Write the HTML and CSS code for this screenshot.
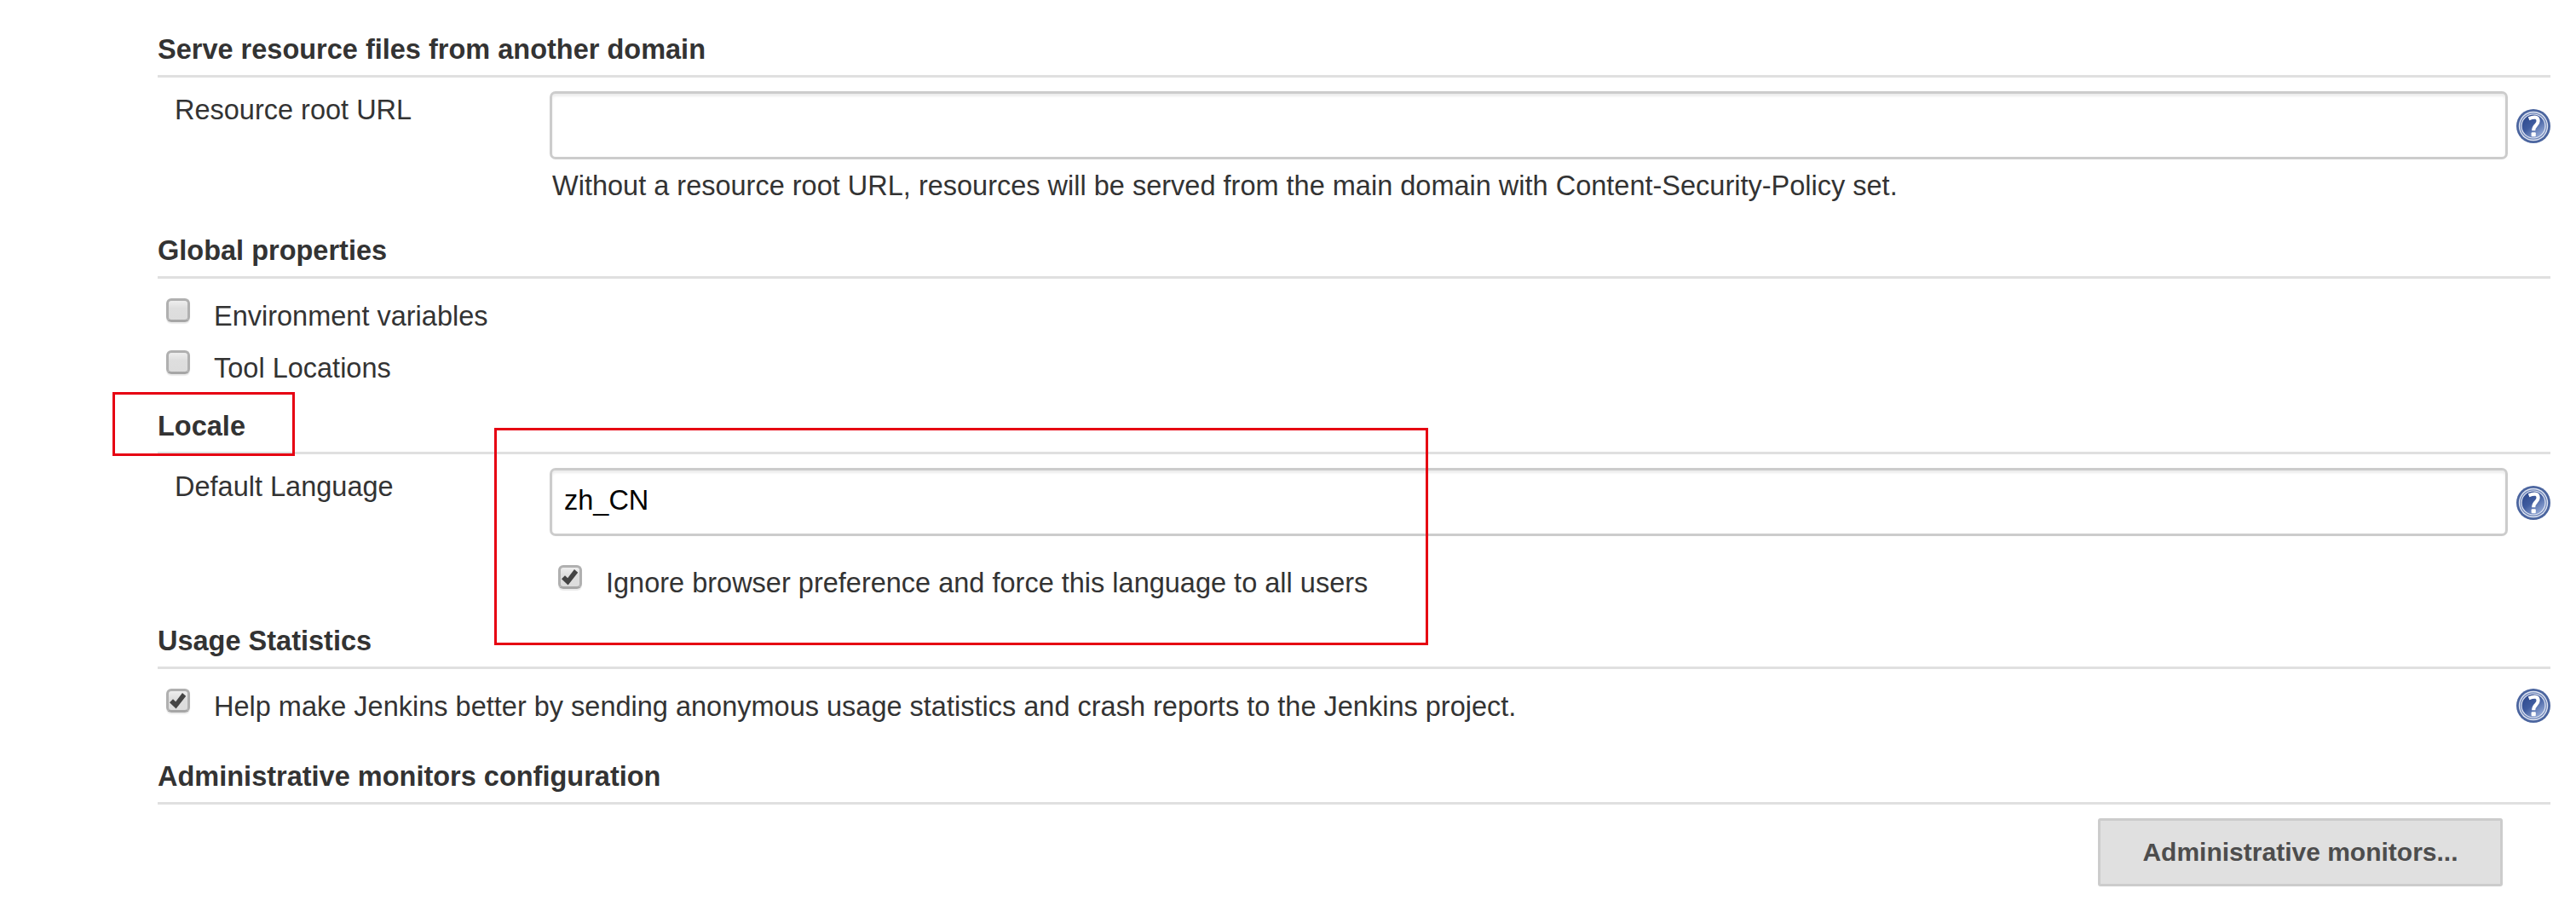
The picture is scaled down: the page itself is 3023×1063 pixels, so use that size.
FILE: index.html
```html
<!DOCTYPE html>
<html lang="en">
<head>
<meta charset="utf-8">
<title>Configure System</title>
<link rel="stylesheet" href="styles.css">
</head>
<body>
<svg width="0" height="0" class="defs">
  <defs>
    <linearGradient id="help-fill" x1="0.1" y1="0" x2="0.9" y2="1">
      <stop offset="0" stop-color="#2d488c"/><stop offset="0.45" stop-color="#3f5c9f"/><stop offset="1" stop-color="#a3b7e0"/>
    </linearGradient>
    <symbol id="help" viewBox="0 0 40 40">
      <circle cx="20" cy="20" r="20" fill="#4b659f"/>
      <circle cx="20" cy="20" r="17.2" fill="#dfe5f2"/>
      <circle cx="20" cy="20" r="15.8" fill="#6d84b8"/>
      <circle cx="20" cy="20" r="14.6" fill="#e3e8f4"/>
      <circle cx="20" cy="20" r="13.4" fill="url(#help-fill)"/>
      <path d="M14.6 11.2Q25.6 7 25.6 14C25.6 19 20.2 18.6 20.2 25.2" fill="none" stroke="#fff" stroke-width="4.2"/>
      <rect x="17.6" y="27.2" width="5.2" height="5" rx="1" fill="#fff"/>
    </symbol>
  </defs>
</svg>
<main class="config">
  <section class="section">
    <h2 class="heading">Serve resource files from another domain</h2>
    <div class="field">
      <label class="label" for="root-url">Resource root URL</label>
      <input class="input" id="root-url" type="text">
      <svg class="help"><use href="#help"/></svg>
      <p class="description">Without a resource root URL, resources will be served from the main domain with Content-Security-Policy set.</p>
    </div>
  </section>
  <section class="section globals">
    <h2 class="heading">Global properties</h2>
    <div class="option"><input class="check" type="checkbox" id="env"><label for="env">Environment variables</label></div>
    <div class="option"><input class="check" type="checkbox" id="tool"><label for="tool">Tool Locations</label></div>
  </section>
  <section class="section locale">
    <h2 class="heading">Locale</h2>
    <div class="field">
      <label class="label" for="lang">Default Language</label>
      <input class="input" id="lang" type="text" value="zh_CN">
      <svg class="help"><use href="#help"/></svg>
      <div class="option nested"><span class="check"><svg class="tick" viewBox="0 0 28 28"><path d="M4 16.2 8 12.2 11.2 15.2 19 5 23.2 8.8 11.6 23.4Z"/></svg></span><span>Ignore browser preference and force this language to all users</span></div>
    </div>
  </section>
  <section class="section usage">
    <h2 class="heading">Usage Statistics</h2>
    <div class="option"><span class="check"><svg class="tick" viewBox="0 0 28 28"><path d="M4 16.2 8 12.2 11.2 15.2 19 5 23.2 8.8 11.6 23.4Z"/></svg></span><span>Help make Jenkins better by sending anonymous usage statistics and crash reports to the Jenkins project.</span><svg class="help"><use href="#help"/></svg></div>
  </section>
  <section class="section monitors">
    <h2 class="heading">Administrative monitors configuration</h2>
    <div class="actions"><button class="button" type="button">Administrative monitors...</button></div>
  </section>
</main>
<div class="mark mark-title"></div>
<div class="mark mark-fields"></div>
</body>
</html>
```
FILE: styles.css
```css
* { box-sizing: border-box; }
body {
  margin: 0;
  position: relative;
  height: 1063px;
  overflow: hidden;
  background: #fff;
  color: #333;
  font: 32.5px/40px "Liberation Sans", Arial, sans-serif;
}
.defs { position: absolute; }
.config { padding: 38px 30px 0 185px; }
.section { margin-bottom: 36px; }
.globals, .locale { margin-bottom: 28px; }
.usage { margin-bottom: 42px; }
.monitors { margin-bottom: 0; }
.heading {
  margin: 0;
  padding-bottom: 10px;
  border-bottom: 3px solid #e0e0e0;
  font-size: inherit;
  font-weight: bold;
}
.field {
  display: grid;
  grid-template-columns: 440px 1fr 40px;
  padding: 16px 0 0 20px;
}
.label { padding-top: 2px; }
.input {
  width: auto;
  height: 80px;
  margin-right: 10px;
  padding: 0 15px 3px 14px;
  border: 3px solid #ccc;
  border-radius: 7px;
  background: #fff;
  box-shadow: inset 0 3px 3px rgba(0, 0, 0, .075);
  color: #000;
  font: inherit;
}
.help { display: block; width: 40px; height: 40px; margin-top: 2px; align-self: center; }
.description { grid-column: 2 / 4; margin: 11px 0 0 3px; }
.option { display: flex; height: 40px; margin-top: 24px; padding-left: 10px; }
.option + .option { margin-top: 21px; }
.nested { grid-column: 2 / 4; margin-top: 35px; }
.check {
  appearance: none;
  flex: none;
  width: 28px;
  height: 28px;
  margin: -1px 28px 0 0;
  border: 3px solid #b0b0b0;
  border-bottom-color: #a6a6a6;
  border-radius: 6px;
  background: linear-gradient(#eee, #dedede 40%, #dcdcdc);
  box-shadow: 0 2px 1px rgba(0, 0, 0, .08);
}
.tick { display: block; width: 28px; height: 28px; margin: -3px; fill: #444; }
.option .help { margin: -1px 0 0 auto; align-self: flex-start; }
.actions { display: flex; justify-content: flex-end; padding: 16px 56px 0 0; }
.button {
  width: 475px;
  height: 80px;
  padding: 0;
  border: 3px solid #ccc;
  border-radius: 3px;
  background: #e0e0e0;
  color: #4d4d4d;
  font: bold 30px/40px "Liberation Sans", Arial, sans-serif;
}
.mark { position: absolute; border: 3px solid #e60012; }
.mark-title { left: 132px; top: 460px; width: 214px; height: 75px; }
.mark-fields { left: 580px; top: 502px; width: 1096px; height: 255px; }
```
